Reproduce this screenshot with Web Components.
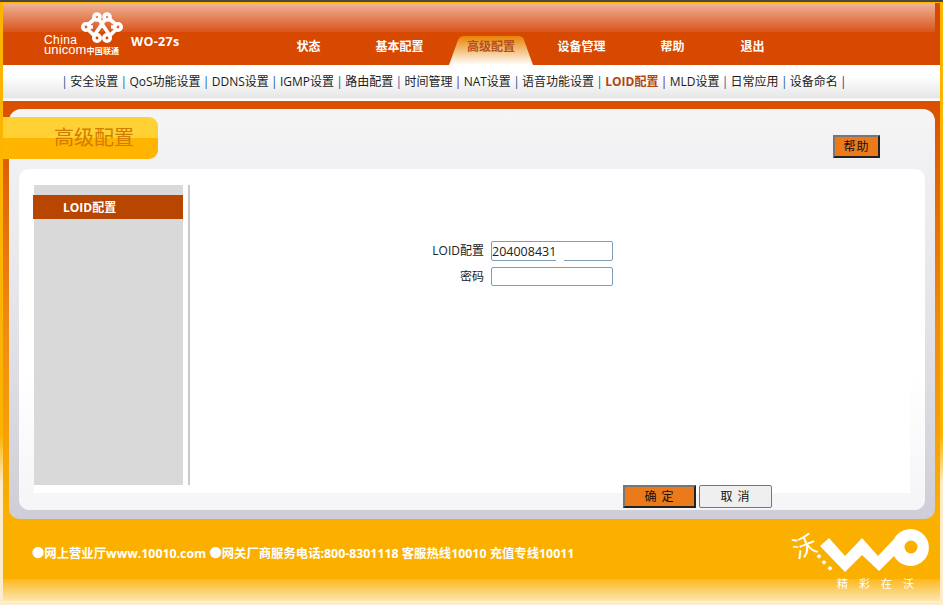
<!DOCTYPE html>
<html lang="zh"><head><meta charset="utf-8"><style>
html,body{margin:0;padding:0;background:#fff;overflow:hidden}
body{font-family:"Open Sans","Noto Sans CJK SC",sans-serif;}
</style></head><body>
<router-page>
  <top-header slot="header"></top-header>
  <sub-nav slot="subnav"></sub-nav>
  <main-panel slot="main"><side-menu slot="side"></side-menu><loid-form slot="content"></loid-form></main-panel>
  <page-footer slot="footer"></page-footer>
</router-page>
<script>
const F='"Open Sans","Noto Sans CJK SC",sans-serif';
function def(name,html){customElements.define(name,class extends HTMLElement{constructor(){super();this.attachShadow({mode:'open'}).innerHTML=html;}});}
def('router-page',`<style>
:host{display:flex;flex-direction:column;width:943px;height:605px;box-sizing:border-box;padding:3px 3px 0;background:linear-gradient(#fdb400 72%,#fdeccb 80%);font-family:${F};position:relative}
.line{position:absolute;left:0;right:0;top:0;height:2px;background:#4a4640}
.sep{height:3px;background:linear-gradient(#f4f4f4,#fff)}
</style><div class="line"></div><slot name="header"></slot><slot name="subnav"></slot><div class="sep"></div><slot name="main"></slot><slot name="footer"></slot>`);
def('top-header',`<style>
:host{display:block;height:62px;background:#d74800;position:relative}
.wrap{height:62px;position:relative;display:flex}
.gloss{position:absolute;left:0;right:5px;top:0;height:29px;background:linear-gradient(#efb49a,#d9541a)}
.brand{position:relative;width:274px;flex:none;color:#fff;display:flex;align-items:flex-start;padding-left:41px;box-sizing:border-box}
.logo{width:87px;flex:none;padding-top:9px}
.knot{display:block;margin:0 0 -8px 36px}
.china{font:12px/9px "Liberation Sans",sans-serif;color:#fff;height:9px;letter-spacing:.4px}
.uni{font:13px/10px "Liberation Sans",sans-serif;color:#fff;white-space:nowrap;height:10px;letter-spacing:.1px}
.uni b{font:bold 8px/10px "Noto Sans CJK SC",sans-serif;letter-spacing:.2px}
.model{margin-top:31px;font:bold 12.5px/16px "Open Sans",sans-serif;color:#fff;white-space:nowrap;letter-spacing:.35px}
nav{position:relative;display:flex;height:30px;margin-top:32px;font:bold 12px/24px ${F};color:#fff}
nav span{display:block;text-align:center;white-space:nowrap}
.on{color:#b5501c;position:relative}
.on svg{position:absolute;left:0;top:0}
.on em{position:relative;font-style:normal}
</style><div class="wrap"><div class="gloss"></div>
<div class="brand"><div class="logo">
<svg class="knot" width="44" height="32" viewBox="0 0 44 32" fill="none" stroke="#fff" stroke-width="3.6">
<circle cx="6" cy="15" r="3.200"/><circle cx="38" cy="15" r="3.200"/>
<circle cx="17" cy="5" r="3"/><circle cx="27" cy="5" r="3"/>
<circle cx="17" cy="26" r="3.200"/><circle cx="27" cy="26" r="3.200"/>
<path d="M8 12.500 L14 7.500 M36 12.500 L30 7.500 M8 17.500 L14 23.500 M36 17.500 L30 23.500 M19 7.500 L29.500 23 M25 7.500 L14.500 23 M9 15 H13 M35 15 H31"/>
</svg>
<div class="china">China</div><div class="uni">unicom<b>中国联通</b></div></div><div class="model">WO-27s</div></div>
<nav>
<span style="width:63px">状态</span><span style="width:119px;margin-right:-10px">基本配置</span>
<span class="on" style="width:84px"><svg width="84" height="30" viewBox="0 0 84 30"><defs><linearGradient id="g" x1="0" y1="0" x2="0" y2="1"><stop offset="0" stop-color="#e88200"/><stop offset="1" stop-color="#fff"/></linearGradient></defs><path d="M0 30 L9 5 Q11 1 15 1 L69 1 Q74 1 75 5 L84 30Z" fill="url(#g)"/></svg><em>高级配置</em></span>
<span style="width:97px">设备管理</span><span style="width:85px">帮助</span><span style="width:75px">退出</span></nav></div>`);
def('sub-nav',`<style>
:host{display:flex;height:33px;padding-left:56px;box-sizing:border-box;background:linear-gradient(#fff 35%,#e6e6e6);font:12px/34px ${F};color:#1c1c1c;white-space:nowrap}
b{color:#b5450c}
i{font-style:normal;color:#15578f;display:inline-block;width:11.2px;text-align:center}
i.p{color:#6a0f70}
</style><span><i>|</i>安全设置<i>|</i>QoS功能设置<i>|</i>DDNS设置<i>|</i>IGMP设置<i>|</i>路由配置<i>|</i>时间管理<i class="p">|</i>NAT设置<i>|</i>语音功能设置<i>|</i><b>LOID配置</b><i class="p">|</i>MLD设置<i>|</i>日常应用<i>|</i>设备命名<i class="p">|</i></span>`);
def('main-panel',`<style>
:host{display:block;height:418px;box-sizing:border-box;padding:8px 5px 0 6px;background:linear-gradient(#d95000,#f08c10 55%,#fbb000);}
.panel{height:410px;box-sizing:border-box;border-radius:12px 12px 10px 10px;background:linear-gradient(#f5f5f6,#e8e8ec 40%,#cfced8);padding:0 10px 9px;display:flex;flex-direction:column}
.head{height:60px;position:relative;flex:none}
.title{position:absolute;left:-16px;top:8px;width:155px;height:42px;border-radius:0 9px 9px 0;background:linear-gradient(#ffd135 50%,#ffb400 50%);font:20px/42px ${F};color:#d27c00;padding-left:51px;box-sizing:border-box}
.help{position:absolute;right:45px;top:26px}
.inner{flex:1;background:linear-gradient(#fff,#fff 60%,#f5f5f8);border-radius:10px;padding:16px 15px 17px;display:flex;min-height:0}
.white{flex:1;background:#fff;display:flex;min-width:0}
.side{width:154px;flex:none;height:300px;display:block;border-right:2px solid #c9c9c9}
.content{flex:1;position:relative}
</style><div class="panel"><div class="head"><div class="title">高级配置</div><x-btn class="help" style="width:47px;height:23px" orange>帮助</x-btn></div>
<div class="inner"><div class="white"><div class="side"><slot name="side"></slot></div><div class="content"><slot name="content"></slot></div></div></div></div>`);
def('side-menu',`<style>
:host{display:block;width:149px;height:300px;background:#d9d9d9;padding-top:10px;box-sizing:border-box}
div{margin-left:-1px;width:150px;height:24px;background:#b84500;color:#fff;font:bold 12px/25px ${F};padding-left:30px;box-sizing:border-box}
</style><div>LOID配置</div>`);
customElements.define('x-btn',class extends HTMLElement{constructor(){super();const o=this.hasAttribute('orange');this.attachShadow({mode:'open'}).innerHTML=`<style>
:host{display:block;box-sizing:border-box;font:12px/19px ${F};text-align:center;color:#111;letter-spacing:1px;
 ${o?'background:#ea7a1a;border:2px solid;border-color:#777 #222 #222 #777;':'background:#efefef;border:1px solid #777;border-radius:2px;line-height:21px;'}}
</style><slot></slot>`;}});
def('loid-form',`<style>
:host{display:block;height:308px;position:relative;font:12px/20px ${F};color:#222}
.rows{display:grid;grid-template-columns:auto 122px;column-gap:7px;justify-content:start;padding:56px 0 0 241px;row-gap:6px;width:max-content}
label{text-align:right;width:53px;white-space:nowrap;justify-self:end;line-height:20px}
.i{box-sizing:border-box;height:20px;border:1px solid #7f9db9;border-radius:2px;background:#fff;padding-left:0;line-height:19px;color:#222;position:relative;font-size:12.5px}
.i.b{height:19px}
.gap{position:absolute;left:64px;width:8px;bottom:-1px;height:1px;background:#fff}
.btns{position:absolute;left:433px;top:300px;display:flex;gap:3px}
</style><div class="rows"><label>LOID配置</label><div class="i">204008431<div class="gap"></div></div><label>密码</label><div class="i b"></div></div>
<div class="btns"><x-btn orange style="width:73px;height:23px">确 定</x-btn><x-btn style="width:73px;height:23px">取 消</x-btn></div>`);
def('page-footer',`<style>
:host{display:block;height:83px;position:relative;background:linear-gradient(#fbb000 60px,#fcb820 60px,#fde6ae 82px,#fff 83px);color:#fff}
.t{padding:25px 0 0 29px;font:bold 12.35px/20px ${F};white-space:nowrap}
svg{position:absolute;left:776px;top:0;overflow:visible}
.s{position:absolute;left:834px;top:58px;font:11px/14px ${F};letter-spacing:11px;white-space:nowrap;color:#fff}
text{font:24px "Noto Sans CJK SC",sans-serif;fill:#fff}
</style><div class="t">●网上营业厅www.10010.com ●网关厂商服务电话:800-8301118 客服热线10010 充值专线10011</div>
<svg width="160" height="58" viewBox="-10 -6 160 58"><path d="M31 21 L40 13 L56 31 L73 13 L89 31 L105 14 A18.5 18.5 0 1 1 105 31 L90 46 L73 30 L56 47Z" fill="#fff"/><circle cx="122" cy="22" r="6.5" fill="#fbb000"/><rect x="28.500" y="29.500" width="3.500" height="3.500" transform="rotate(45 30 31)" fill="#fff"/><rect x="33.500" y="35.500" width="3.500" height="3.500" transform="rotate(45 35 37)" fill="#fff"/><rect x="39.500" y="41.500" width="3.500" height="3.500" transform="rotate(45 41 43)" fill="#fff"/><text x="4" y="30" transform="rotate(-22 16 22)">沃</text></svg><div class="s">精彩在沃</div>`);
</script></body></html>
